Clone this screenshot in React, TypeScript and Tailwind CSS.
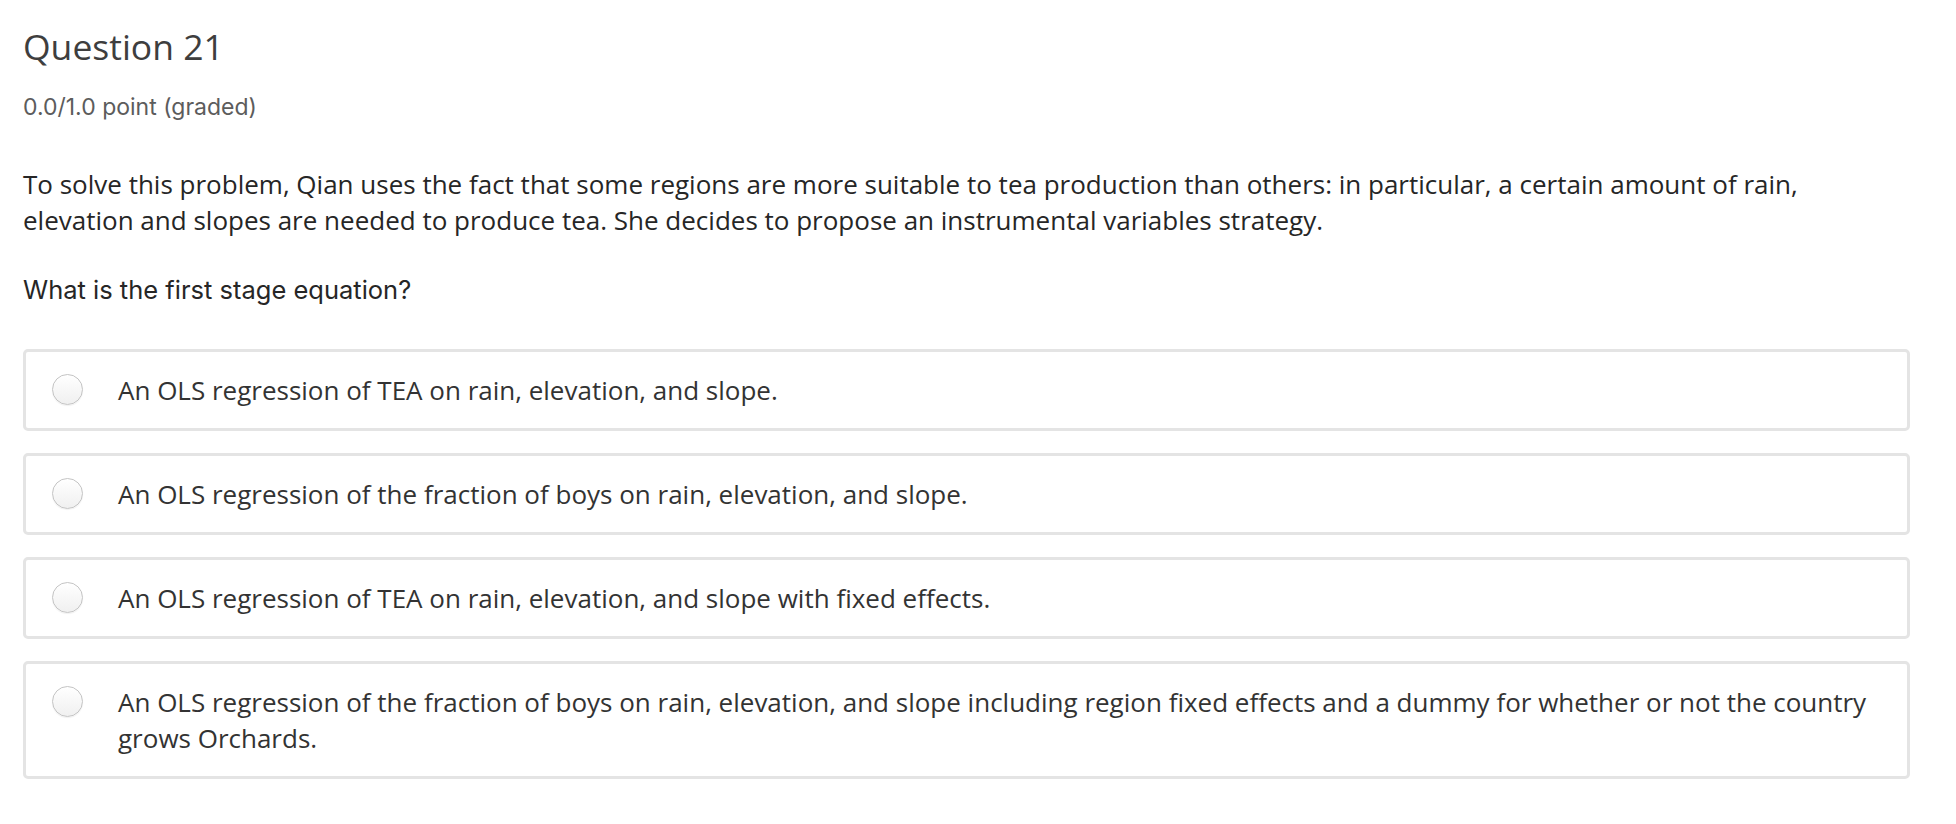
import React from 'react';

const OPTIONS: string[] = [
  'An OLS regression of TEA on rain, elevation, and slope.',
  'An OLS regression of the fraction of boys on rain, elevation, and slope.',
  'An OLS regression of TEA on rain, elevation, and slope with fixed effects.',
  'An OLS regression of the fraction of boys on rain, elevation, and slope including region fixed effects and a dummy for whether or not the country grows Orchards.',
];

const OPEN_SANS = "font-['Open_Sans',sans-serif]";
const SYSTEM = "font-['Inter','Liberation_Sans',sans-serif]";

const Radio = (): React.JSX.Element => (
  <span className="mt-[2px] block h-[31px] w-[31px] shrink-0 rounded-full border border-[#c4c4c4] bg-gradient-to-b from-white to-[#f0f0f0] shadow-[0_1px_1px_rgba(0,0,0,0.06)]" />
);

export default function App(): React.JSX.Element {
  return (
    <div className="min-h-screen bg-white pl-[23px] pr-[46px] pt-[20px]">
      <h2 className={`${OPEN_SANS} text-[35.5px] leading-[52px] text-[#3e3e3e]`}>Question 21</h2>
      <div className={`${SYSTEM} mt-[20px] text-[23px] leading-[30px] text-[#5c5c5c]`}>
        0.0/1.0 point (graded)
      </div>

      <p className={`${OPEN_SANS} mt-[44px] text-[26px] leading-[36px] text-[#262626]`}>
        To solve this problem, Qian uses the fact that some regions are more suitable to tea
        production than others: in particular, a certain amount of rain, elevation and slopes are
        needed to produce tea. She decides to propose an instrumental variables strategy.
      </p>

      <p className={`${SYSTEM} mt-[34px] text-[25.5px] leading-[36px] text-[#262626]`}>
        What is the first stage equation?
      </p>

      <div className="mt-[41px] flex flex-col gap-[22px]">
        {OPTIONS.map(
          (option: string): React.JSX.Element => (
            <label
              key={option}
              className="flex items-start gap-[35px] rounded-[5px] border-[3px] border-[#e4e4e4] bg-white py-[20px] pl-[26px] pr-[24px]"
            >
              <Radio />
              <span className={`${OPEN_SANS} text-[26px] leading-[36px] text-[#333333]`}>
                {option}
              </span>
            </label>
          )
        )}
      </div>
    </div>
  );
}
